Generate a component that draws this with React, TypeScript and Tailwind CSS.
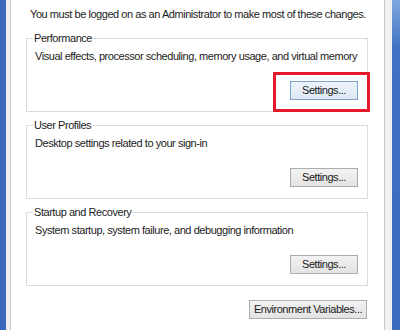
const GROUPS = [
  {
    title: 'Performance',
    text: 'Visual effects, processor scheduling, memory usage, and virtual memory',
    highlighted: true,
  },
  { title: 'User Profiles', text: 'Desktop settings related to your sign-in', highlighted: false },
  {
    title: 'Startup and Recovery',
    text: 'System startup, system failure, and debugging information',
    highlighted: false,
  },
];

function WinButton({ label, focused = false, className = '' }: { label: string; focused?: boolean; className?: string }) {
  return (
    <button
      className={`flex h-[19px] items-center justify-center border text-[#1a1a1a] ${
        focused
          ? 'border-[#7da2ce] bg-gradient-to-b from-[#eef4fa] to-[#dde8f3]'
          : 'border-[#adadad] bg-gradient-to-b from-[#f2f2f2] to-[#e3e3e3]'
      } ${className}`}
    >
      {label}
    </button>
  );
}

export default function App() {
  return (
    <div className="flex h-[330px] w-[400px] overflow-hidden bg-white font-[family-name:Liberation_Sans,Arial,sans-serif] text-[11px] tracking-[-0.45px] text-[#1c1c1c]">
      <div className="w-[6px] shrink-0 bg-[#3b69bd]" />
      <div className="w-[4px] shrink-0 bg-[#f0f0f0]" />
      <div className="w-[1px] shrink-0 bg-[#c9c9c9]" />

      <main className="flex-1 pl-[15px] pr-[16px]">
        <p className="mt-[6px] h-[16px] whitespace-nowrap pl-[4px] leading-[16px]">
          You must be logged on as an Administrator to make most of these changes.
        </p>

        <div className="mt-[8px] flex flex-col gap-[5px]">
          {GROUPS.map((group) => (
            <fieldset key={group.title} className="relative h-[82px] border border-[#dcdcdc] pl-[6px] pr-[9px]">
              <legend className="px-[1px] leading-[16px]">{group.title}</legend>
              <p className="mt-[2px] whitespace-nowrap pl-[2px] leading-[16px]">{group.text}</p>
              <div className="mt-[17px] flex justify-end">
                <WinButton label="Settings..." focused={group.highlighted} className="w-[68px]" />
              </div>
              {group.highlighted && (
                <div className="absolute left-[246px] top-[26px] h-[40px] w-[97px] border-[3px] border-[#e3192c]" />
              )}
            </fieldset>
          ))}
        </div>

        <div className="mt-[14px] flex justify-end pr-[1px]">
          <WinButton label="Environment Variables..." className="h-[18px] w-[118px]" />
        </div>
      </main>

      <div className="w-[1px] shrink-0 bg-[#c9c9c9]" />
      <div className="w-[7px] shrink-0 bg-[#f0f0f0]" />
      <div className="w-[8px] shrink-0 bg-gradient-to-b from-[#7fa9de] via-[#3f70c2] via-[15%] to-[#3b6bbf]" />
    </div>
  );
}
